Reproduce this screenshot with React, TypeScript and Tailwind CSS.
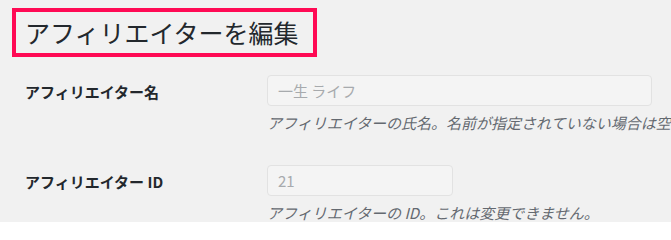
import React from "react";

const font = {
  fontFamily: '"Noto Sans CJK JP", "Noto Sans", sans-serif',
};

type RowProps = {
  label: string;
  value: string;
  inputWidth: string;
  note: string;
};

const FieldRow: React.FC<RowProps> = ({ label, value, inputWidth, note }) => (
  <div className="grid grid-cols-[242px_1fr] pl-[25px]">
    <div className="flex h-[31px] items-center pt-[3px] text-[15px] font-bold text-[#23282d] whitespace-nowrap">
      {label}
    </div>
    <div className="min-w-0">
      <input
        type="text"
        readOnly
        value={value}
        className={`${inputWidth} h-[31px] rounded-[4px] border border-[#e2e2e2] bg-[#f4f4f4] px-[10px] text-[15px] text-[#a7aaad] outline-none`}
      />
      <p className="mt-[7px] whitespace-nowrap text-[15px] leading-[20px] italic text-[#646970]">
        {note}
      </p>
    </div>
  </div>
);

export default function App() {
  return (
    <div
      className="h-[222px] w-[671px] overflow-hidden bg-[#f1f1f1]"
      style={font}
    >
      <div className="pl-[12px] pt-[8px]">
        <div className="flex h-[49px] w-[305px] items-center border-4 border-[#ff0a54] pl-[9px]">
          <h1 className="text-[25px] font-normal text-[#23282d] whitespace-nowrap">
            アフィリエイターを編集
          </h1>
        </div>
      </div>

      <div className="mt-[18px] flex flex-col gap-[32px]">
        <FieldRow
          label="アフィリエイター名"
          value="一生 ライフ"
          inputWidth="w-[385px]"
          note="アフィリエイターの氏名。名前が指定されていない場合は空白になります。"
        />
        <FieldRow
          label="アフィリエイター ID"
          value="21"
          inputWidth="w-[186px]"
          note="アフィリエイターの ID。これは変更できません。"
        />
      </div>
    </div>
  );
}
